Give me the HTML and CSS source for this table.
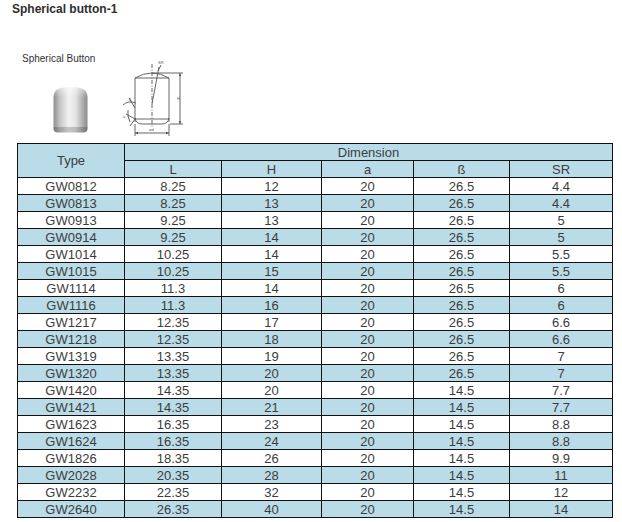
FILE: index.html
```html
<!DOCTYPE html>
<html>
<head>
<meta charset="utf-8">
<link rel="stylesheet" href="styles.css">
</head>
<body>
<h1 class="title">Spherical button-1</h1>
<div class="figure">
  <div class="fig-left">
    <div class="fig-label">Spherical Button</div>
    <svg class="photo" width="35" height="49" viewBox="0 0 35 49">
      <defs>
        <linearGradient id="cyl" x1="0" y1="0" x2="1" y2="0">
          <stop offset="0" stop-color="#8e8e8e"/>
          <stop offset="0.2" stop-color="#c8c8c8"/>
          <stop offset="0.45" stop-color="#f2f2f2"/>
          <stop offset="0.65" stop-color="#e4e4e4"/>
          <stop offset="1" stop-color="#8a8a8a"/>
        </linearGradient>
        <linearGradient id="dome" x1="0" y1="0" x2="0" y2="1">
          <stop offset="0" stop-color="#ffffff" stop-opacity="0.5"/>
          <stop offset="1" stop-color="#ffffff" stop-opacity="0"/>
        </linearGradient>
      </defs>
      <path d="M0.5,13 C0.5,5 8,3 17.5,3 C27,3 34.5,5 34.5,13 L34.5,44 Q34.5,48.5 30,48.5 L5,48.5 Q0.5,48.5 0.5,44 Z" fill="url(#cyl)"/>
      <path d="M0.5,13 C0.5,5 8,3 17.5,3 C27,3 34.5,5 34.5,13 Z" fill="url(#dome)"/>
      <path d="M0.5,43 L34.5,43 L34.5,44 Q34.5,48.5 30,48.5 L5,48.5 Q0.5,48.5 0.5,44 Z" fill="#000" fill-opacity="0.18"/>
    </svg>
  </div>
  <svg class="drawing" width="70" height="84" viewBox="0 0 70 84">
    <g fill="none" stroke="#555" stroke-width="0.9">
      <path d="M15,64 L15,20 Q32,10 49,20 L49,64"/>
      <line x1="15" y1="20" x2="49" y2="20"/>
      <path d="M15,60 Q16,66 22,66 L42,66 Q48,66 49,60"/>
      <line x1="15" y1="61" x2="49" y2="61"/>
      <line x1="32" y1="6" x2="32" y2="70" stroke-dasharray="4 1.5 1 1.5"/>
      <line x1="32" y1="46" x2="39" y2="9"/>
      <line x1="38" y1="13" x2="41" y2="7"/>
      <line x1="32" y1="15" x2="63" y2="15"/>
      <line x1="50" y1="66" x2="63" y2="66"/>
      <line x1="60" y1="15" x2="60" y2="66"/>
      <line x1="15" y1="66" x2="15" y2="78"/>
      <line x1="49" y1="66" x2="49" y2="78"/>
      <line x1="15" y1="75" x2="49" y2="75"/>
      <path d="M3,47 Q8,42 16,45"/>
      <line x1="9" y1="40" x2="15" y2="50"/>
      <line x1="6" y1="56" x2="15" y2="61"/>
      <path d="M8,52 Q7,58 10,64"/>
      <line x1="15" y1="61" x2="10" y2="68"/>
    </g>
    <g fill="#555">
      <path d="M60,15 l-1.2,3 l2.4,0 Z"/>
      <path d="M60,66 l-1.2,-3 l2.4,0 Z"/>
      <path d="M15,75 l3,-1.2 l0,2.4 Z"/>
      <path d="M49,75 l-3,-1.2 l0,2.4 Z"/>
    </g>
    <text class="dim" x="38" y="6">SR</text>
    <text class="dim" x="57" y="42">H</text>
    <text class="dim" x="29" y="73">ød</text>
    <text class="dim" x="9" y="43">ß</text>
    <text class="dim" x="3" y="60">a</text>
  </svg>
</div>
<table class="spec">
  <colgroup>
    <col class="c-type"><col class="c-l"><col class="c-h"><col class="c-a"><col class="c-b"><col class="c-sr">
  </colgroup>
  <thead>
    <tr><th rowspan="2" class="type-head">Type</th><th colspan="5">Dimension</th></tr>
    <tr><th>L</th><th>H</th><th>a</th><th>ß</th><th>SR</th></tr>
  </thead>
  <tbody>
    <tr><td>GW0812</td><td>8.25</td><td>12</td><td>20</td><td>26.5</td><td>4.4</td></tr>
    <tr class="alt"><td>GW0813</td><td>8.25</td><td>13</td><td>20</td><td>26.5</td><td>4.4</td></tr>
    <tr><td>GW0913</td><td>9.25</td><td>13</td><td>20</td><td>26.5</td><td>5</td></tr>
    <tr class="alt"><td>GW0914</td><td>9.25</td><td>14</td><td>20</td><td>26.5</td><td>5</td></tr>
    <tr><td>GW1014</td><td>10.25</td><td>14</td><td>20</td><td>26.5</td><td>5.5</td></tr>
    <tr class="alt"><td>GW1015</td><td>10.25</td><td>15</td><td>20</td><td>26.5</td><td>5.5</td></tr>
    <tr><td>GW1114</td><td>11.3</td><td>14</td><td>20</td><td>26.5</td><td>6</td></tr>
    <tr class="alt"><td>GW1116</td><td>11.3</td><td>16</td><td>20</td><td>26.5</td><td>6</td></tr>
    <tr><td>GW1217</td><td>12.35</td><td>17</td><td>20</td><td>26.5</td><td>6.6</td></tr>
    <tr class="alt"><td>GW1218</td><td>12.35</td><td>18</td><td>20</td><td>26.5</td><td>6.6</td></tr>
    <tr><td>GW1319</td><td>13.35</td><td>19</td><td>20</td><td>26.5</td><td>7</td></tr>
    <tr class="alt"><td>GW1320</td><td>13.35</td><td>20</td><td>20</td><td>26.5</td><td>7</td></tr>
    <tr><td>GW1420</td><td>14.35</td><td>20</td><td>20</td><td>14.5</td><td>7.7</td></tr>
    <tr class="alt"><td>GW1421</td><td>14.35</td><td>21</td><td>20</td><td>14.5</td><td>7.7</td></tr>
    <tr><td>GW1623</td><td>16.35</td><td>23</td><td>20</td><td>14.5</td><td>8.8</td></tr>
    <tr class="alt"><td>GW1624</td><td>16.35</td><td>24</td><td>20</td><td>14.5</td><td>8.8</td></tr>
    <tr><td>GW1826</td><td>18.35</td><td>26</td><td>20</td><td>14.5</td><td>9.9</td></tr>
    <tr class="alt"><td>GW2028</td><td>20.35</td><td>28</td><td>20</td><td>14.5</td><td>11</td></tr>
    <tr><td>GW2232</td><td>22.35</td><td>32</td><td>20</td><td>14.5</td><td>12</td></tr>
    <tr class="alt"><td>GW2640</td><td>26.35</td><td>40</td><td>20</td><td>14.5</td><td>14</td></tr>
  </tbody>
</table>
</body>
</html>
```
FILE: styles.css
```css
html, body {
  margin: 0;
  padding: 0;
  background: #ffffff;
}
body {
  font-family: "Liberation Sans", Arial, sans-serif;
  color: #333333;
}
.title {
  margin: 0;
  padding: 2px 0 0 12px;
  font-size: 12px;
  line-height: 14px;
  font-weight: bold;
  color: #2e2e2e;
}
.figure {
  display: flex;
  margin: 34px 0 0 22px;
  height: 93px;
}
.fig-left {
  width: 98px;
  display: flex;
  flex-direction: column;
}
.fig-label {
  margin-top: 3px;
  font-size: 10px;
  line-height: 12px;
  color: #333;
}
.photo {
  display: block;
  margin: 19px 0 0 31px;
}
.drawing {
  display: block;
  margin-top: 8px;
}
.dim {
  font-family: "Liberation Sans", Arial, sans-serif;
  font-size: 4px;
  fill: #555;
}
.spec {
  margin-left: 17px;
  border-collapse: collapse;
  table-layout: fixed;
  width: 596px;
  font-size: 13px;
  color: #3c3c3c;
}
.c-type { width: 107px; }
.c-l { width: 97px; }
.c-h { width: 100px; }
.c-a { width: 92px; }
.c-b { width: 96px; }
.c-sr { width: 103px; }
.spec th, .spec td {
  border: 1px solid #111;
  padding: 0;
  height: 16px;
  line-height: 15px;
  text-align: center;
  font-weight: normal;
  white-space: nowrap;
}
.spec th {
  background: #badce8;
}
.spec tr.alt td {
  background: #badce8;
}
```
